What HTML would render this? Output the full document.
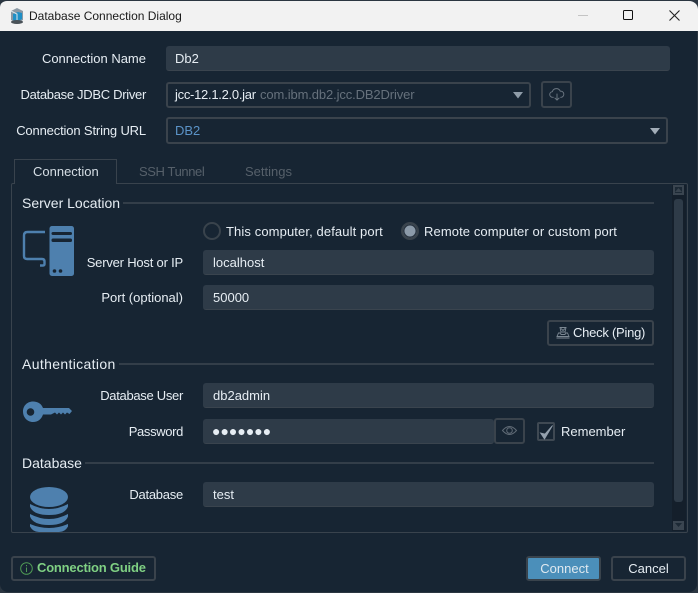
<!DOCTYPE html>
<html><head><meta charset="utf-8">
<style>
html,body{margin:0;padding:0;background:#1a2530;}
#r{position:relative;width:698px;height:593px;overflow:hidden;background:#2b3641;font-family:"Liberation Sans",sans-serif;font-size:13px;color:#e6edf3;}
#w{position:absolute;left:0;top:0;width:697px;height:592px;background:#172533;border-radius:8px;}
.a{position:absolute;box-sizing:border-box;}
.t{position:absolute;white-space:nowrap;line-height:16px;}
.l{position:absolute;white-space:nowrap;line-height:16px;text-align:right;}
.h{position:absolute;white-space:nowrap;line-height:16px;font-size:14px;}
.i{position:absolute;box-sizing:border-box;background:#2e3b48;border-radius:3px;border-bottom:1px solid #3a444e;line-height:25px;padding-left:9px;color:#e6edf3;}
.b{position:absolute;box-sizing:border-box;border:2px solid #3a434c;border-radius:3px;}
.ln{position:absolute;height:2px;background:#333e49;}
svg{position:absolute;overflow:visible;}
</style></head><body><div id="r"><div id="w"></div>
<div class="a" style="left:0;top:0;width:698px;height:31px;background:#f2f2f2;border-top:1px solid #2b3641;border-radius:7px 9px 0 0;"></div>
<svg style="left:8px;top:7px" width="18" height="18" viewBox="0 0 18 18"><path d="M3 4 9 1l6 3v9l-6 3-6-3z" fill="#8a99a5"/><path d="M5 7l5-2 4 1v6l-5 3-4-2z" fill="#1f8fc6"/><path d="M3 4l6 3v9" fill="none" stroke="#dfe6ea"/><ellipse cx="9" cy="15" rx="6" ry="2" fill="#4a5258"/></svg>
<div class="t" style="left:29px;top:8px;color:#1a1a1a;font-size:12px;">Database Connection Dialog</div>
<div class="a" style="left:578px;top:15px;width:10px;height:1px;background:#c4c4c4"></div>
<div class="a" style="left:623px;top:10px;width:10px;height:10px;border:1.4px solid #111;border-radius:1.5px"></div>
<svg style="left:669px;top:10px" width="11" height="11" viewBox="0 0 11 11"><path d="M.5.5l10 10M10.500.5l-10 10" stroke="#222" stroke-width="1.1" fill="none"/></svg>

<div class="l" style="right:552px;top:51px;">Connection Name</div>
<div class="i" style="left:166px;top:46px;width:504px;height:25px;">Db2</div>
<div class="l" style="right:552px;top:87px;letter-spacing:-.3px;">Database JDBC Driver</div>
<div class="b" style="left:166px;top:82px;width:365px;height:26px;"></div>
<div class="t" style="left:175px;top:87px;letter-spacing:-.28px;">jcc-12.1.2.0.jar</div>
<div class="t" style="left:260px;top:87px;color:#66717c;letter-spacing:-.12px;">com.ibm.db2.jcc.DB2Driver</div>
<svg style="left:513px;top:92px" width="10" height="7"><path d="M0 0h10l-5 6.500z" fill="#8f9ca8"/></svg>
<div class="b" style="left:541px;top:81px;width:31px;height:27px;"></div>
<svg style="left:549px;top:87px" width="16" height="15" viewBox="0 0 17 16"><path d="M5 11H4A3 3 0 0 1 3.500 5 4.500 4.500 0 0 1 12 4.500 3.200 3.200 0 0 1 13 11h-1M8.500 7v7M6 11.500l2.500 2.500 2.500-2.500" fill="none" stroke="#6c7782" stroke-width="1"/></svg>
<div class="l" style="right:552px;top:123px;letter-spacing:-.15px;">Connection String URL</div>
<div class="b" style="left:166px;top:117px;width:502px;height:27px;"></div>
<div class="t" style="left:175px;top:123px;color:#5b93c7">DB2</div>
<svg style="left:650px;top:128px" width="10" height="7"><path d="M0 0h10l-5 6.500z" fill="#a2adb8"/></svg>

<div class="a" style="left:11px;top:183px;width:677px;height:350px;border:1px solid #39434d;border-radius:2px;"></div>
<div class="a" style="left:14px;top:159px;width:103px;height:25px;border:1px solid #39434d;border-bottom:0;background:#172533;"></div>
<div class="t" style="left:33px;top:164px;color:#d6dee5">Connection</div>
<div class="t" style="left:139px;top:164px;color:#56606a;letter-spacing:-.4px;">SSH Tunnel</div>
<div class="t" style="left:245px;top:164px;color:#56606a">Settings</div>

<div class="h" style="left:22px;top:195px;">Server Location</div>
<div class="ln" style="left:123px;top:202px;width:531px;"></div>
<svg style="left:23px;top:225px" width="52" height="51" viewBox="0 0 52 51"><path d="M22 7H4.500Q1 7 1 10.500V31q0 3 3 3h15q2.500 0 2.500 2.500V39q0 1.500-1.500 1.500h-3" fill="none" stroke="#4e80ae" stroke-width="2.400"/><rect x="26.500" y="1" width="24.500" height="50" rx="2.500" fill="#4e80ae"/><rect x="28.500" y="7" width="20.500" height="3" rx="1.500" fill="#172533"/><rect x="28.500" y="13.500" width="20.500" height="3.500" rx="1.500" fill="#172533"/><circle cx="31.500" cy="46" r="1.800" fill="#172533"/><circle cx="37.500" cy="46" r="1.800" fill="#172533"/></svg>
<div class="a" style="left:203px;top:222px;width:18px;height:18px;border:2px solid #39434c;border-radius:50%;"></div>
<div class="t" style="left:226px;top:224px;letter-spacing:.11px;">This computer, default port</div>
<div class="a" style="left:401px;top:222px;width:18px;height:18px;border:2px solid #39434c;border-radius:50%;background:#8b9aa9;box-shadow:inset 0 0 0 1.500px #2a3541;"></div>
<div class="t" style="left:424px;top:224px;letter-spacing:.1px;">Remote computer or custom port</div>
<div class="l" style="right:515px;top:255px;letter-spacing:-.2px;">Server Host or IP</div>
<div class="i" style="left:203px;top:250px;width:451px;height:25px;padding-left:10px;">localhost</div>
<div class="l" style="right:515px;top:290px;">Port (optional)</div>
<div class="i" style="left:203px;top:285px;width:451px;height:25px;padding-left:10px;">50000</div>
<div class="b" style="left:547px;top:320px;width:107px;height:26px;"></div>
<svg style="left:556px;top:326px" width="14" height="13" viewBox="0 0 14 13"><path d="M4 1.500h6L9 6H5zM5 2.500l2 2 2-2M2.500 7h2L5 8.500h4L9.500 7h2L13 10.500H1zM.5 12h13" fill="none" stroke="#7c8893" stroke-width=".9"/></svg>
<div class="t" style="left:573px;top:325px;letter-spacing:-.25px;">Check (Ping)</div>

<div class="h" style="left:22px;top:356px;letter-spacing:.35px;">Authentication</div>
<div class="ln" style="left:119px;top:363px;width:535px;"></div>
<svg style="left:23px;top:401px" width="49" height="22" viewBox="0 0 49 22"><path d="M10 .5C15 .5 18.500 3 20 7H46L49 10 46.500 13 44 11.500 42 13.500 40 11.500 38 13.500 36 11.500 34 13.500 32 11.500 28 13.500H20C18.500 18 15 21 10 21 4 21 0 16 0 10.500S4 .5 10 .5z" fill="#4e80ae"/><circle cx="7.500" cy="11" r="3.800" fill="#172533"/></svg>
<div class="l" style="right:515px;top:388px;letter-spacing:-.3px;">Database User</div>
<div class="i" style="left:203px;top:383px;width:451px;height:25px;padding-left:10px;">db2admin</div>
<div class="l" style="right:515px;top:424px;letter-spacing:-.35px;">Password</div>
<div class="i" style="left:203px;top:419px;width:291px;height:25px;padding-left:9px;font-size:14px;">&#9679;&#9679;&#9679;&#9679;&#9679;&#9679;&#9679;</div>
<div class="b" style="left:494px;top:418px;width:31px;height:26px;"></div>
<svg style="left:502px;top:425px" width="15" height="11" viewBox="0 0 15 11"><path d="M.5 5.500Q7.500-2.500 14.500 5.500 7.500 13.500.5 5.500z" fill="none" stroke="#5f6a75"/><circle cx="7.500" cy="5.500" r="2.800" fill="none" stroke="#5f6a75"/></svg>
<div class="a" style="left:537px;top:422px;width:18px;height:19px;border:2px solid #3f4953;border-radius:2px;"></div>
<svg style="left:540px;top:425px" width="13" height="15" viewBox="0 0 13 15"><path d="M.5 8L4.500 14 12.500.5 5 9z" fill="#94a1ae" stroke="#94a1ae" stroke-width=".8"/></svg>
<div class="t" style="left:561px;top:424px;">Remember</div>

<div class="h" style="left:22px;top:455px;">Database</div>
<div class="ln" style="left:85px;top:462px;width:569px;"></div>
<svg style="left:29px;top:486px" width="40" height="46" viewBox="0 0 40 46"><ellipse cx="20" cy="11" rx="19" ry="10" fill="#4e80ae"/><path d="M1 18Q20 28 39 18v2.500Q36 29 20 29 4 29 1 20.500zM1 28Q20 38 39 28v2.500Q36 39 20 39 4 39 1 30.500zM1 38Q20 46 39 38v2.500Q36 46 30 46H10Q4 46 1 40.500z" fill="#4e80ae"/></svg>
<div class="l" style="right:515px;top:487px;letter-spacing:-.25px;">Database</div>
<div class="i" style="left:203px;top:482px;width:451px;height:25px;padding-left:10px;">test</div>

<div class="a" style="left:672px;top:185px;width:14px;height:346px;background:#141f2b;"></div>
<div class="a" style="left:673px;top:185px;width:11px;height:10px;border:2px solid #3a4550;background:#1c2935;"></div>
<svg style="left:675px;top:187px" width="7" height="6"><path d="M0 5 3.500 1 7 5z" fill="#39444f"/></svg>
<div class="a" style="left:674px;top:199px;width:9px;height:303px;background:#2e3b48;border-radius:3px;"></div>
<div class="a" style="left:673px;top:521px;width:11px;height:9px;background:#3a4550;"></div>
<svg style="left:675px;top:523px" width="7" height="5"><path d="M0 0 3.500 4 7 0z" fill="#1c2935"/></svg>

<div class="b" style="left:11px;top:556px;width:145px;height:25px;"></div>
<svg style="left:20px;top:562px" width="13" height="13" viewBox="0 0 13 13"><circle cx="6.500" cy="6.500" r="5.800" fill="none" stroke="#4f9a55"/><path d="M6.500 3v1.200M6.500 5.500v4.500" stroke="#4f9a55" fill="none"/></svg>
<div class="t" style="left:37px;top:560px;color:#7fd083;font-weight:bold;letter-spacing:-.2px;">Connection Guide</div>
<div class="a" style="left:526px;top:556px;width:75px;height:25px;background:#4b8fba;border:2px solid #39434c;border-radius:3px;text-align:center;line-height:21px;color:#dfe9f0;padding-left:2px;">Connect</div>
<div class="b" style="left:611px;top:556px;width:75px;height:25px;text-align:center;line-height:21px;color:#e6edf3;">Cancel</div>
</div></body></html>
